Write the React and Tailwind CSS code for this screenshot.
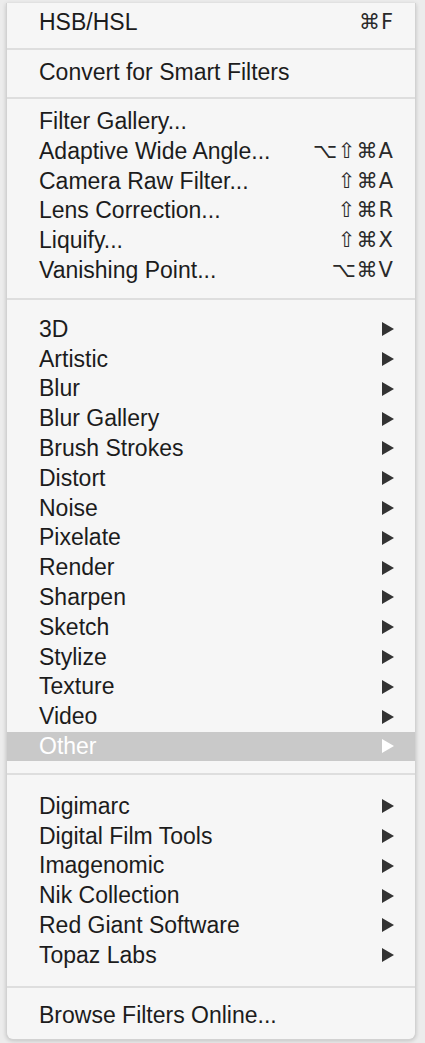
import React from 'react';

const sections = [
  { items: [{ label: 'HSB/HSL', keys: '⌘F' }], sep: 'h-[20px] pt-[10px]' },
  { items: [{ label: 'Convert for Smart Filters' }], sep: 'h-[19px] pt-[9px]' },
  {
    items: [
      { label: 'Filter Gallery...' },
      { label: 'Adaptive Wide Angle...', keys: '⌥⇧⌘A' },
      { label: 'Camera Raw Filter...', keys: '⇧⌘A' },
      { label: 'Lens Correction...', keys: '⇧⌘R' },
      { label: 'Liquify...', keys: '⇧⌘X' },
      { label: 'Vanishing Point...', keys: '⌥⌘V' },
    ],
    sep: 'h-[29px] pt-[13px]',
  },
  {
    items: [
      '3D', 'Artistic', 'Blur', 'Blur Gallery', 'Brush Strokes', 'Distort', 'Noise',
      'Pixelate', 'Render', 'Sharpen', 'Sketch', 'Stylize', 'Texture', 'Video',
    ].map((label) => ({ label, sub: true })).concat([{ label: 'Other', sub: true, active: true }]),
    sep: 'h-[30px] pt-[12px]',
  },
  {
    items: [
      'Digimarc', 'Digital Film Tools', 'Imagenomic', 'Nik Collection',
      'Red Giant Software', 'Topaz Labs',
    ].map((label) => ({ label, sub: true })),
    sep: 'h-[30px] pt-[16px]',
  },
  { items: [{ label: 'Browse Filters Online...' }] },
];

// submenu arrow
const Arrow = ({ active }) => (
  <svg width="12" height="14" viewBox="0 0 12 14" className="shrink-0">
    <polygon points="0,0 12,7 0,14" fill={active ? '#ffffff' : '#333333'} />
  </svg>
);

const MenuRow = ({ item }) => (
  <div
    className={`h-[29.8px] flex items-center justify-between pl-[32px] pr-[21px] ${
      item.active ? 'bg-[#c9c9c9] text-white' : 'text-[#1c1c1c]'
    }`}
  >
    <span className="leading-none">{item.label}</span>
    {item.keys && (
      <span className="leading-none tracking-[1px] text-[21px] [font-family:'DejaVu_Sans',sans-serif] text-[#2a2a2a]">
        {item.keys}
      </span>
    )}
    {item.sub && <Arrow active={item.active} />}
  </div>
);

export default function App() {
  return (
    <div className="min-h-[1043px] w-[425px] bg-[#ececec] pt-[3px] pl-[6px] pr-[9px] [font-family:'Liberation_Sans',Arial,sans-serif] text-[23px]">
      <div className="bg-[#f6f6f6] pt-[5px] pb-[9px] rounded-b-[7px] border border-t-0 border-[#d2d2d2] shadow-[0_1px_4px_rgba(0,0,0,0.18)]">
        {sections.map((sec, i) => (
          <div key={i}>
            {sec.items.map((item) => (
              <MenuRow key={item.label} item={item} />
            ))}
            {sec.sep && (
              <div className={sec.sep}>
                <div className="h-[2px] bg-[#dedede]" />
              </div>
            )}
          </div>
        ))}
      </div>
    </div>
  );
}
